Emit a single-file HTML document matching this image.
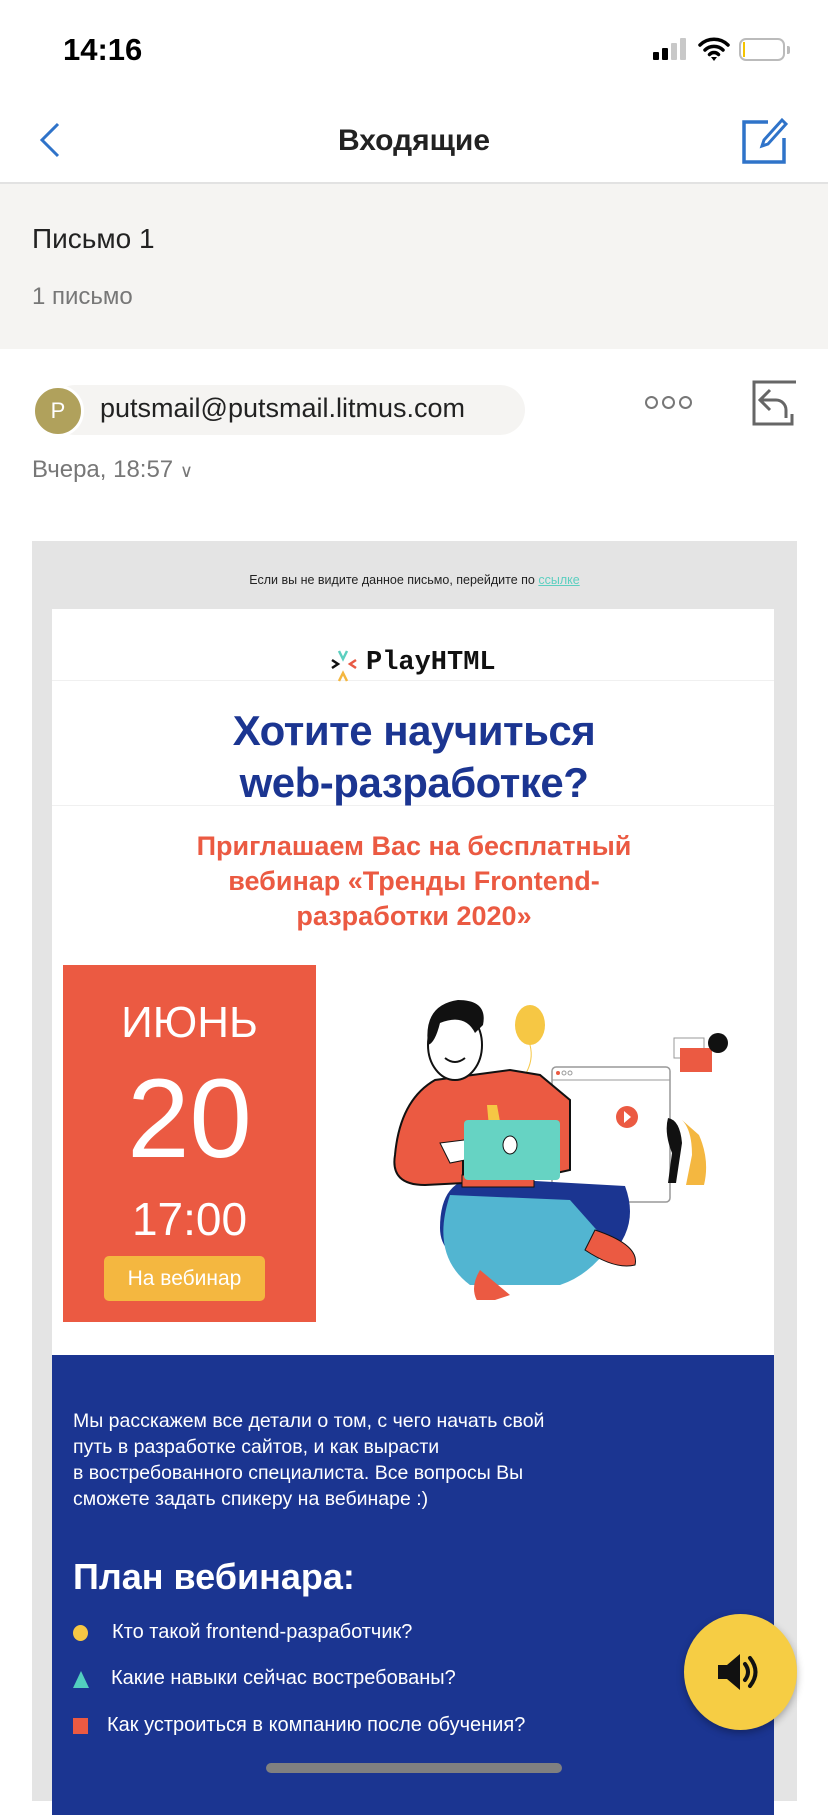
<!DOCTYPE html>
<html><head><meta charset="utf-8"><style>
*{margin:0;padding:0;box-sizing:border-box}
body{width:828px;height:1792px;overflow:hidden;background:#fff;font-family:"Liberation Sans",sans-serif;position:relative}
.a{position:absolute}
.c{left:0;right:0;text-align:center}
</style></head><body>
<div class="a" style="left:63px;top:32px;font-size:31px;font-weight:bold;color:#000">14:16</div>
<div class="a" style="left:653px;top:52px;width:6px;height:8px;background:#000;border-radius:1px"></div>
<div class="a" style="left:662px;top:48px;width:6px;height:12px;background:#000;border-radius:1px"></div>
<div class="a" style="left:671px;top:43px;width:6px;height:17px;background:#c8c8c8;border-radius:1px"></div>
<div class="a" style="left:680px;top:38px;width:6px;height:22px;background:#c8c8c8;border-radius:1px"></div>
<svg class="a" style="left:698px;top:36px" width="32" height="26" viewBox="0 0 32 26"><path d="M2 9a20 20 0 0 1 28 0M7 14a13 13 0 0 1 18 0M11.5 18.5a6 6 0 0 1 9 0" stroke="#000" stroke-width="3.5" fill="none" stroke-linecap="round"/><path d="M13 21l3 4 3-4z" fill="#000"/></svg>
<div class="a" style="left:739px;top:38px;width:46px;height:23px;border:2px solid #bbb;border-radius:7px"></div>
<div class="a" style="left:743px;top:42px;width:2px;height:15px;background:#f5c400"></div>
<div class="a" style="left:787px;top:46px;width:3px;height:8px;background:#bbb;border-radius:0 2px 2px 0"></div>
<svg class="a" style="left:38px;top:122px" width="24" height="36"><path d="M20 2L4 18l16 16" stroke="#2f73c9" stroke-width="3" fill="none"/></svg>
<div class="a c" style="top:124px;font-size:30px;font-weight:bold;color:#222">Входящие</div>
<svg class="a" style="left:740px;top:116px" width="48" height="48"><path d="M28 6H4v40h40V22" stroke="#2f73c9" stroke-width="3.5" fill="none"/><path d="M42 4l4 4-18 20-6 2 2-6z" stroke="#2f73c9" stroke-width="3" fill="none"/></svg>
<div class="a" style="left:0;top:182px;width:828px;height:167px;background:#f5f4f2;border-top:2px solid #e2e2e2"></div>
<div class="a" style="left:32px;top:223px;font-size:28px;color:#222">Письмо 1</div>
<div class="a" style="left:32px;top:283px;font-size:24px;color:#777">1 письмо</div>
<div class="a" style="left:50px;top:385px;width:475px;height:50px;background:#f5f4f2;border-radius:25px"></div>
<div class="a" style="left:32px;top:385px;width:52px;height:52px;background:#b0a15c;border-radius:50%;border:3px solid #fff;color:#fff;font-size:22px;text-align:center;line-height:46px">P</div>
<div class="a" style="left:100px;top:393px;font-size:27px;color:#222">putsmail@putsmail.litmus.com</div>
<div class="a" style="left:645px;top:396px;width:13px;height:13px;border:2.5px solid #777;border-radius:50%"></div>
<div class="a" style="left:662px;top:396px;width:13px;height:13px;border:2.5px solid #777;border-radius:50%"></div>
<div class="a" style="left:679px;top:396px;width:13px;height:13px;border:2.5px solid #777;border-radius:50%"></div>
<svg class="a" style="left:750px;top:380px" width="48" height="48"><path d="M46 2H4v42h38V34" stroke="#666" stroke-width="3" fill="none"/><path d="M20 10L10 20l10 10M10 20h16a10 10 0 0 1 10 10v8" stroke="#666" stroke-width="3" fill="none"/></svg>
<div class="a" style="left:32px;top:456px;font-size:24px;color:#777">Вчера, 18:57 <span style="font-size:18px">∨</span></div>
<div class="a" style="left:32px;top:541px;width:765px;height:1260px;background:#e4e4e4"></div>
<div class="a c" style="top:573px;font-size:12.5px;color:#222;left:32px;right:31px">Если вы не видите данное письмо, перейдите по <span style="color:#5ccfc0;text-decoration:underline">ссылке</span></div>
<div class="a" style="left:52px;top:609px;width:722px;height:1200px;background:#fff"></div>
<div class="a" style="left:52px;top:680px;width:722px;height:1px;background:#f0f0f0"></div>
<div class="a" style="left:52px;top:805px;width:722px;height:1px;background:#f0f0f0"></div>
<svg class="a" style="left:330px;top:650px" width="28" height="32"><path d="M2 10l6 4-6 4" stroke="#111" stroke-width="2.5" fill="none"/><path d="M9 1l4 8 4-8" stroke="#5ccfc0" stroke-width="2.5" fill="none"/><path d="M26 10l-6 4 6 4" stroke="#e85a44" stroke-width="2.5" fill="none"/><path d="M9 31l4-8 4 8" stroke="#f4b740" stroke-width="2.5" fill="none"/></svg>
<div class="a" style="left:366px;top:648px;font-family:'Liberation Mono',monospace;font-weight:bold;font-size:27px;color:#111">PlayHTML</div>
<div class="a c" style="top:705px;font-size:42px;font-weight:bold;color:#1b3591;line-height:52px;letter-spacing:-0.5px">Хотите научиться<br>web-разработке?</div>
<div class="a c" style="top:829px;font-size:27px;font-weight:bold;color:#eb5a42;line-height:35px">Приглашаем Вас на бесплатный<br>вебинар «Тренды Frontend-<br>разработки 2020»</div>
<div class="a" style="left:63px;top:965px;width:253px;height:357px;background:#eb5a42"></div>
<div class="a" style="left:63px;width:253px;top:998px;text-align:center;color:#fff;font-size:44px">ИЮНЬ</div>
<div class="a" style="left:63px;width:253px;top:1054px;text-align:center;color:#fff;font-size:112px;line-height:130px">20</div>
<div class="a" style="left:63px;width:253px;top:1192px;text-align:center;color:#fff;font-size:46px">17:00</div>
<div class="a" style="left:104px;top:1256px;width:161px;height:45px;background:#f4b740;border-radius:5px;color:#fff;font-size:21px;text-align:center;line-height:45px">На вебинар</div>
<svg class="a" style="left:340px;top:1000px" width="400" height="300" viewBox="0 0 400 300">
<rect x="212" y="67" width="118" height="135" rx="4" fill="#fff" stroke="#999" stroke-width="1.5"/>
<line x1="212" y1="80" x2="330" y2="80" stroke="#999"/>
<circle cx="218" cy="73" r="2" fill="#eb5a42"/><circle cx="224" cy="73" r="2" fill="none" stroke="#999"/><circle cx="230" cy="73" r="2" fill="none" stroke="#999"/>
<circle cx="287" cy="117" r="11" fill="#eb5a42"/><path d="M284 111l7 6-7 6z" fill="#fff"/>
<ellipse cx="190" cy="25" rx="15" ry="20" fill="#f6c744"/>
<path d="M190 45q4 15-5 30" stroke="#f6c744" fill="none"/>
<rect x="334" y="38" width="30" height="20" fill="#fff" stroke="#999"/>
<rect x="340" y="48" width="32" height="24" fill="#eb5a42"/>
<circle cx="378" cy="43" r="10" fill="#111"/>
<path d="M342 120q10 10 10 35l-6 30h18q6-25-5-50z" fill="#f4b740"/>
<path d="M328 118q12 2 14 25l-6 40h-8l4-30q-8-20-4-35z" fill="#111"/>
<path d="M200 90q20 0 20 40l-30 10z" fill="#eb5a42" stroke="#111"/>
<path d="M140 178q-40 0-40 50 0 30 40 38l130-10q30-30 15-70z" fill="#1b3591"/>
<path d="M110 195q-20 60 20 90h90q30-10 50-40l-40-45z" fill="#52b5d1"/>
<path d="M140 270q-12 20 0 35l30-10z" fill="#eb5a42"/>
<path d="M255 230q45 15 40 35-20 5-50-15z" fill="#eb5a42" stroke="#111"/>
<path d="M95 80q-35 20-40 75-5 30 30 30l100-5 45-10 0-70-30-25-30-5z" fill="#eb5a42" stroke="#111" stroke-width="2"/>
<path d="M147 105l10-0 10 55-15 0z" fill="#f6c744"/>
<ellipse cx="115" cy="45" rx="27" ry="35" fill="#fff" stroke="#111" stroke-width="2"/>
<path d="M88 45q-5-40 30-45 30 0 25 25l-8 8q-10-20-35-10-5 20-12 22z" fill="#111"/>
<path d="M105 58q10 8 20 0" stroke="#111" fill="none" stroke-width="2"/>
<path d="M100 143l40-5 20 15-50 10z" fill="#fff" stroke="#111"/>
<rect x="122" y="160" width="72" height="15" fill="#111"/>
<rect x="122" y="175" width="72" height="12" fill="#eb5a42" stroke="#111"/>
<rect x="124" y="120" width="96" height="60" rx="4" fill="#66d3c3"/>
<ellipse cx="170" cy="145" rx="7" ry="9" fill="#fff" stroke="#111"/>
</svg>
<div class="a" style="left:52px;top:1355px;width:722px;height:460px;background:#1b3591"></div>
<div class="a" style="left:73px;top:1408px;font-size:19.5px;color:#fff;line-height:26px">Мы расскажем все детали о том, с чего начать свой<br>путь в разработке сайтов, и как вырасти<br>в востребованного специалиста. Все вопросы Вы<br>сможете задать спикеру на вебинаре :)</div>
<div class="a" style="left:73px;top:1556px;font-size:36px;font-weight:bold;color:#fff">План вебинара:</div>
<div class="a" style="left:73px;top:1625px;width:15px;height:16px;border-radius:50%;background:#f6c744"></div>
<div class="a" style="left:112px;top:1621px;font-size:20px;color:#fff">Кто такой frontend-разработчик?</div>
<svg class="a" style="left:73px;top:1671px" width="16" height="17"><path d="M8 0l8 17H0z" fill="#52cfbf"/></svg>
<div class="a" style="left:111px;top:1667px;font-size:20px;color:#fff">Какие навыки сейчас востребованы?</div>
<div class="a" style="left:73px;top:1718px;width:15px;height:16px;background:#eb5a42"></div>
<div class="a" style="left:107px;top:1714px;font-size:20px;color:#fff">Как устроиться в компанию после обучения?</div>
<div class="a" style="left:684px;top:1614px;width:113px;height:116px;border-radius:50%;background:#f6cd44;box-shadow:0 3px 8px rgba(0,0,0,.3)"></div>
<svg class="a" style="left:715px;top:1647px" width="50" height="50" viewBox="0 0 50 50"><path d="M3 18h9l13-11v36L12 32H3z" fill="#111"/><path d="M30 17q6 8 0 16M35 11q11 14 0 28" stroke="#111" stroke-width="4" fill="none" stroke-linecap="round"/></svg>
<div class="a" style="left:266px;top:1763px;width:296px;height:10px;border-radius:5px;background:#808080"></div>
</body></html>
